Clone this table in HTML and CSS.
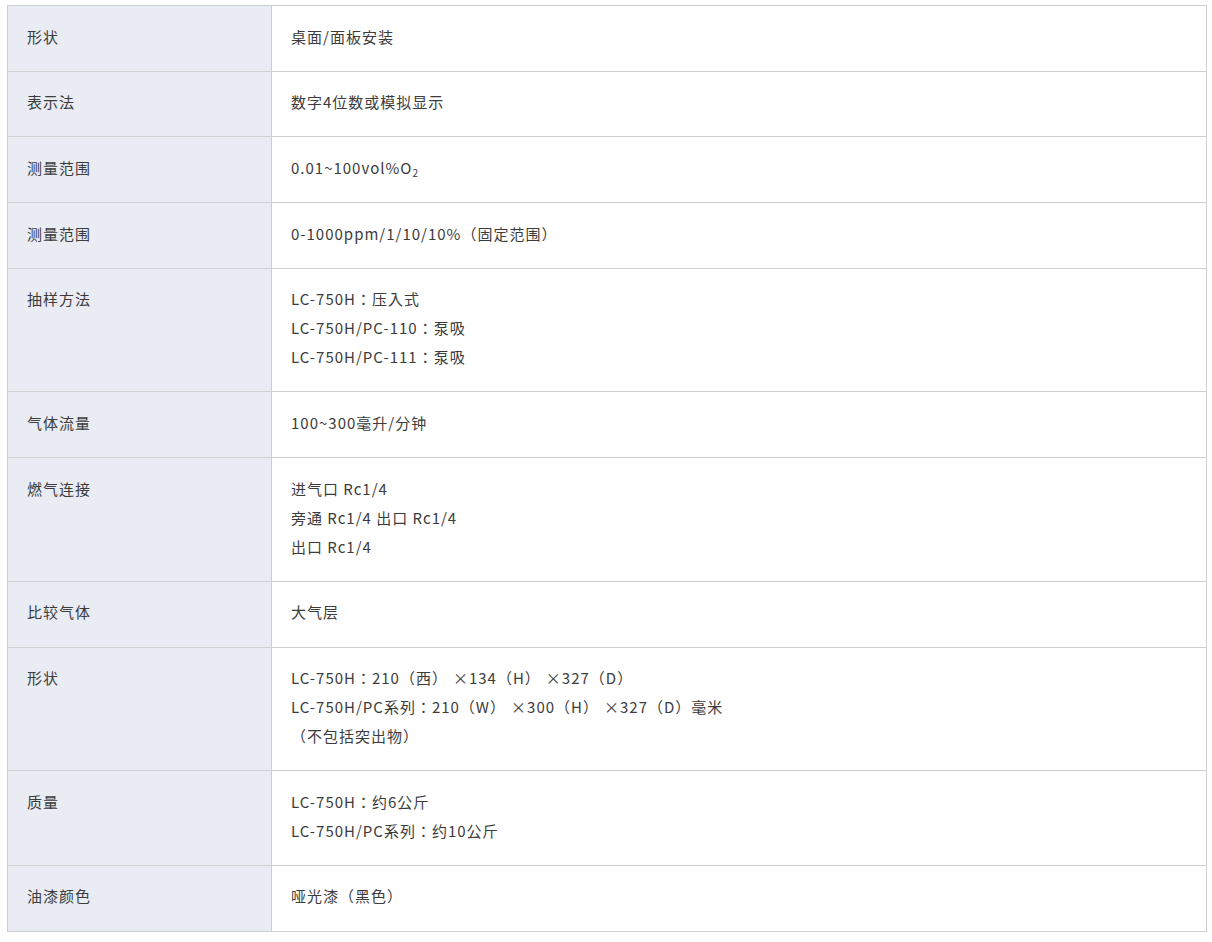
FILE: index.html
```html
<!DOCTYPE html>
<html lang="ja">
<head>
<meta charset="utf-8">
<link rel="stylesheet" href="styles.css">
</head>
<body>
<table class="spec">
  <colgroup><col class="col-label"><col></colgroup>
  <tr><th>形状</th><td>桌面/面板安装</td></tr>
  <tr><th>表示法</th><td>数字4位数或模拟显示</td></tr>
  <tr><th>测量范围</th><td>0.01~100vol%O<sub>2</sub></td></tr>
  <tr><th>测量范围</th><td>0-1000ppm/1/10/10%（固定范围）</td></tr>
  <tr><th>抽样方法</th><td>LC-750H：压入式<br>LC-750H/PC-110：泵吸<br>LC-750H/PC-111：泵吸</td></tr>
  <tr><th>气体流量</th><td>100~300毫升/分钟</td></tr>
  <tr><th>燃气连接</th><td>进气口 Rc1/4<br>旁通 Rc1/4 出口 Rc1/4<br>出口 Rc1/4</td></tr>
  <tr><th>比较气体</th><td>大气层</td></tr>
  <tr><th>形状</th><td>LC-750H：210（西）<span class="times">×</span>134（H）<span class="times">×</span>327（D）<br>LC-750H/PC系列：210（W）<span class="times">×</span>300（H）<span class="times">×</span>327（D）毫米<br>（不包括突出物）</td></tr>
  <tr><th>质量</th><td>LC-750H：约6公斤<br>LC-750H/PC系列：约10公斤</td></tr>
  <tr><th>油漆颜色</th><td>哑光漆（黑色）</td></tr>
</table>
</body>
</html>
```

FILE: styles.css
```css
html, body {
  margin: 0;
  padding: 0;
  background: #fff;
}
body {
  padding: 5px 0 0 7px;
  font-family: "Noto Sans CJK JP", "Noto Sans CJK SC", sans-serif;
  font-size: 15px;
  color: #3c3c3c;
}
.spec {
  border-collapse: collapse;
  width: 1200px;
  table-layout: fixed;
}
.col-label {
  width: 264px;
}
.spec th,
.spec td {
  border: 1px solid #cfcfcf;
  padding: 15.5px 19px 20.2px;
  line-height: 29px;
  text-align: left;
  vertical-align: top;
  font-weight: normal;
  letter-spacing: 1px;
}
.spec th {
  background: #e9ecf3;
}
.spec td {
  background: #fff;
}
.spec sub {
  font-size: 10px;
  line-height: 0;
  vertical-align: -3px;
}
.times {
  margin-left: 5px;
}
```
